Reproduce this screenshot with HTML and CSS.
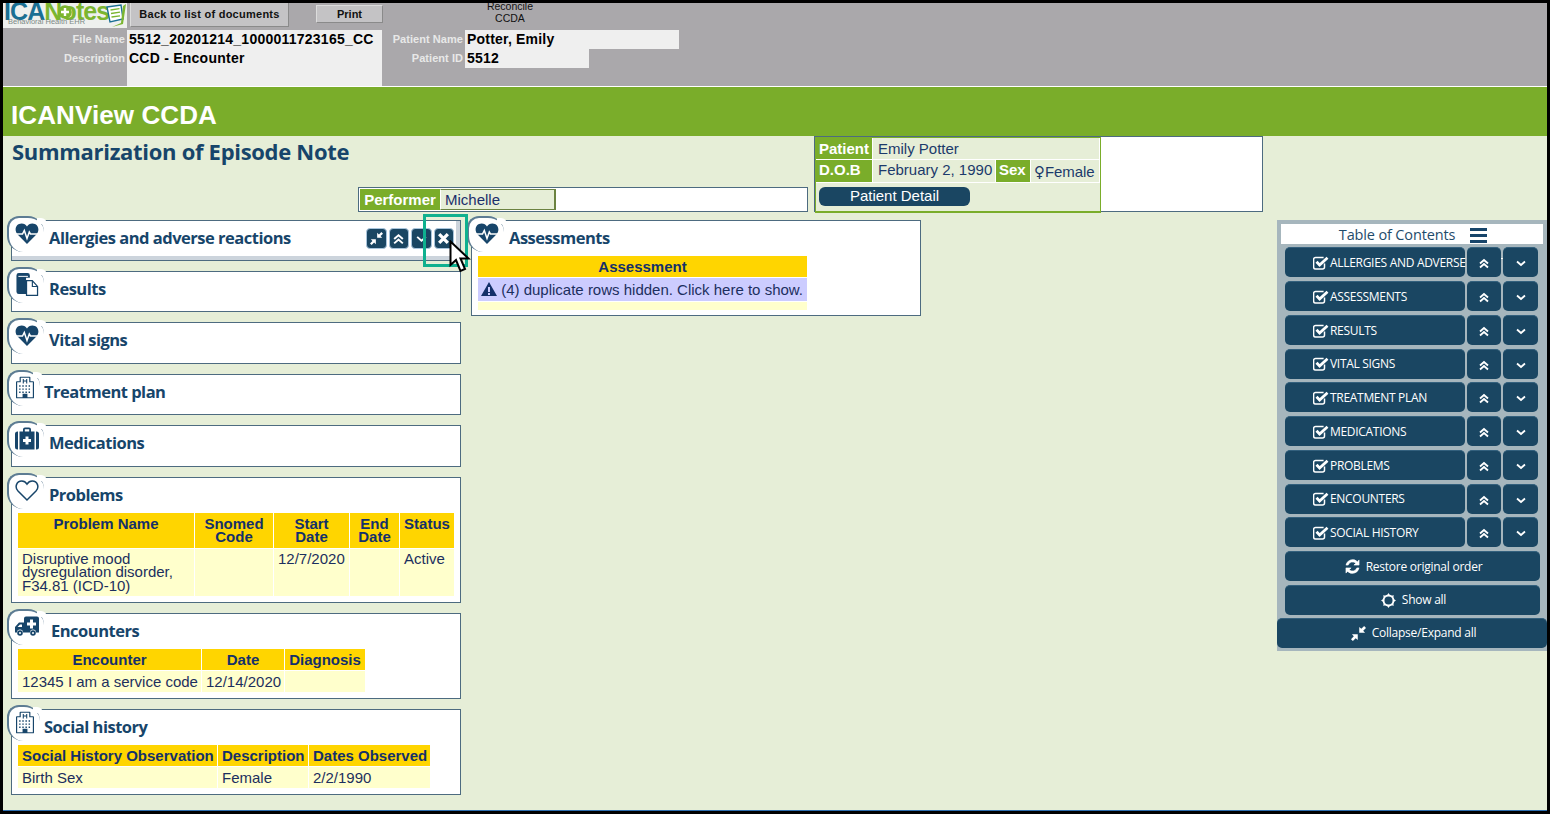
FILE: index.html
```html
<!DOCTYPE html>
<html lang="en">
<head>
<meta charset="utf-8">
<title>ICANView CCDA</title>
<link rel="stylesheet" href="styles.css">
</head>
<body>
<svg class="defs" width="0" height="0" aria-hidden="true">
  <symbol id="i-heartbeat" viewBox="0 0 24 22">
    <path fill="currentColor" d="M12 21.500 2.600 12C-1.200 7.800.6 1 6.600 1c2.500 0 4.200 1.200 5.400 3 1.200-1.800 2.900-3 5.400-3 6 0 7.800 6.800 4 11z"/>
    <path fill="none" stroke="#fff" stroke-width="1.500" d="M1 11.500h6.500l1.800-3.500 2.700 8 2.300-6.500 1.200 2h7.500"/>
  </symbol>
  <symbol id="i-files" viewBox="0 0 24 24">
    <path fill="currentColor" d="M1 2.500A2.500 2.500 0 0 1 3.500 0h9A2.500 2.500 0 0 1 15 2.500V5h-4v17H3.500A2.500 2.500 0 0 1 1 19.500z"/>
    <path fill="#fff" d="M3 3h10v1H3z"/>
    <path fill="#fff" stroke="currentColor" stroke-width="1.300" d="M11.500 8h6l5.500 6v9.300H11.500z"/>
    <path fill="currentColor" d="M17 8h1.200v5.500H23v1.200h-6z"/>
  </symbol>
  <symbol id="i-hospital" viewBox="0 0 20 24">
    <path fill="currentColor" d="M5 0h10a1 1 0 0 1 1 1v4h3a1 1 0 0 1 1 1v17a1 1 0 0 1-1 1H1a1 1 0 0 1-1-1V6a1 1 0 0 1 1-1h3V1a1 1 0 0 1 1-1z"/>
    <path fill="#fff" d="M5.300 1.300h9.400V6.300h4v16.400h-6V19h-5.400v3.700h-6V6.300h4z"/>
    <path fill="currentColor" d="M7.500 2.500h1.200v1.700h2.600V2.500h1.200v5h-1.200V5.400H8.700v2.100H7.500zM3.500 9.500h1.600v1.600H3.500zM7 9.500h1.600v1.600H7zM10.500 9.500h1.600v1.600h-1.600zM14 9.500h1.600v1.600H14zM3.500 13h1.600v1.600H3.500zM7 13h1.600v1.600H7zM10.500 13h1.600v1.600h-1.600zM14 13h1.600v1.600H14zM3.500 16.500h1.600v1.600H3.500zM7 16.500h1.600v1.600H7zM10.500 16.500h1.600v1.600h-1.600zM14 16.500h1.600v1.600H14z"/>
  </symbol>
  <symbol id="i-medkit" viewBox="0 0 24 22">
    <path fill="currentColor" fill-rule="evenodd" d="M2.500 4H3v18h-.5A2.500 2.500 0 0 1 0 19.500v-13A2.500 2.500 0 0 1 2.500 4zM21 4h.5A2.500 2.500 0 0 1 24 6.500v13a2.500 2.500 0 0 1-2.500 2.500H21zM8 2a2 2 0 0 1 2-2h4a2 2 0 0 1 2 2v2h3.500v18h-15V4H8zm1.800 2h4.400V1.800H9.800zM10.500 9v2.500H8v3h2.500V17h3v-2.500H16v-3h-2.500V9z"/>
  </symbol>
  <symbol id="i-heart" viewBox="0 0 24 22">
    <path fill="none" stroke="currentColor" stroke-width="1.500" d="M12 20.500 3 11.600C-.6 7.800 1.400 1.500 6.800 1.500c2.300 0 4 1.200 5.200 3.100 1.200-1.900 2.900-3.100 5.200-3.100 5.400 0 7.400 6.300 3.800 10.100z"/>
  </symbol>
  <symbol id="i-ambulance" viewBox="0 0 24 20">
    <path fill="currentColor" fill-rule="evenodd" d="M9 2a2 2 0 0 1 2-2h11a2 2 0 0 1 2 2v14h-3a3 3 0 0 0-6 0H8a3 3 0 0 0-6 0H0V10.500L4 6h5zM2.500 10.500h4.500V8H5zM15 3v3h-3v3h3v3h3V9h3V6h-3V3z"/>
    <circle fill="currentColor" cx="5" cy="16.500" r="2.800"/><circle fill="#fff" cx="5" cy="16.500" r="1"/>
    <circle fill="currentColor" cx="18" cy="16.500" r="2.800"/><circle fill="#fff" cx="18" cy="16.500" r="1"/>
  </symbol>
  <symbol id="i-compress" viewBox="0 0 16 16">
    <path fill="currentColor" d="M14 0l2 2-3 3 2 2.200H8.800V1l2.200 2zM2 16l-2-2 3-3-2-2.200h6.200V15L5 13z"/>
  </symbol>
  <symbol id="i-dup" viewBox="0 0 12 12">
    <path fill="none" stroke="currentColor" stroke-width="1.800" d="M2 6.500 6 3l4 3.500M2 10.500 6 7l4 3.500"/>
  </symbol>
  <symbol id="i-down" viewBox="0 0 12 12">
    <path fill="none" stroke="currentColor" stroke-width="1.800" d="M2 4.500 6 8l4-3.500"/>
  </symbol>
  <symbol id="i-times" viewBox="0 0 12 12">
    <path fill="none" stroke="currentColor" stroke-width="3" d="M2 2l8 8M10 2l-8 8"/>
  </symbol>
  <symbol id="i-check" viewBox="0 0 16 14">
    <path fill="none" stroke="currentColor" stroke-width="1.500" d="M11.500 7.500V11a2 2 0 0 1-2 2H2.600a2 2 0 0 1-2-2V3.500a2 2 0 0 1 2-2h8"/>
    <path fill="none" stroke="currentColor" stroke-width="2.800" d="M3.500 5.800 6.600 9 14.500 1.800"/>
  </symbol>
  <symbol id="i-refresh" viewBox="0 0 16 16">
    <path fill="currentColor" stroke="currentColor" stroke-width=".6" d="M15 1v5.500H9.500l2-2A5 5 0 0 0 3.400 6.500H1A7.300 7.300 0 0 1 13.300 2.800zM1 15V9.500h5.500l-2 2a5 5 0 0 0 8.100-2h2.400A7.300 7.300 0 0 1 2.700 13.200z"/>
  </symbol>
  <symbol id="i-sun" viewBox="0 0 16 16">
    <circle cx="8" cy="8" r="5.300" fill="none" stroke="currentColor" stroke-width="2"/>
    <path fill="currentColor" d="M8 0l1.500 2.500h-3zM8 16l-1.500-2.500h3zM0 8l2.500-1.500v3zM16 8l-2.500 1.500v-3zM2.300 2.300l2.800.7-2.100 2.100zM13.700 13.700l-2.800-.7 2.100-2.100zM13.700 2.300l-.7 2.800-2.100-2.100zM2.300 13.700l.7-2.800 2.100 2.100z"/>
  </symbol>
  <symbol id="i-warn" viewBox="0 0 16 14">
    <path fill="currentColor" fill-rule="evenodd" d="M8 0l8 14H0zM7 5v5h2V5zm0 6v2h2v-2z"/>
  </symbol>
</svg>

<div class="frame">
  <header class="topbar">
    <div class="toolbar">
      <div class="logo">
        <div class="logo-word"><span class="logo-ica">ICA</span><span class="logo-notes">Notes</span></div>
        <div class="logo-sub">Behavioral Health EHR</div>
        <svg class="logo-art" viewBox="0 0 124 24" width="124" height="24">
          <circle cx="62" cy="9" r="6.800" fill="#7bb530"/>
          <path fill="#fff" d="M60.800 5h2.400v2.800H66v2.400h-2.800V13h-2.400v-2.800H58V7.800h2.800z"/>
          <path fill="#fff" stroke="#1a6f93" stroke-width="1.400" d="M104 4l14-2 2 14-13 3z"/>
          <path stroke="#7bb530" stroke-width="1.300" d="M107.500 7l9-1.300M108 10.500l9-1.300M108.500 14l8.500-1.200"/>
          <path fill="#7bb530" d="M120 3l3-2-3 20-11 3 9-4z"/>
        </svg>
      </div>
      <button class="btn-back">Back to list of documents</button>
      <button class="btn-print">Print</button>
      <div class="reconcile">Reconcile<br>CCDA</div>
    </div>
    <div class="fields">
      <div class="fields-file">
        <div class="field-labels"><span>File Name</span><span>Description</span></div>
        <div class="file-box"><div>5512_20201214_1000011723165_CC</div><div>CCD - Encounter</div></div>
      </div>
      <div class="fields-patient">
        <div class="field-labels"><span>Patient Name</span><span>Patient ID</span></div>
        <div class="patient-vals"><div class="val-name">Potter, Emily</div><div class="val-id">5512</div></div>
      </div>
    </div>
  </header>

  <div class="banner">ICANView CCDA</div>

  <main class="content">
    <section class="summary">
      <div class="summary-left">
        <h1 class="doc-title">Summarization of Episode Note</h1>
        <div class="performer"><span class="performer-label">Performer</span><span class="performer-val">Michelle</span></div>
      </div>
      <div class="patient-card">
        <table class="patient-table">
          <colgroup><col class="pc1"><col class="pc2"><col class="pc3"><col class="pc4"></colgroup>
          <tr class="pr1"><th class="pt-head">Patient</th><td colspan="3">Emily Potter</td></tr>
          <tr class="pr2"><th class="pt-head">D.O.B</th><td>February 2, 1990</td><th class="pt-sex">Sex</th><td class="pt-female"><span class="venus">♀</span>Female</td></tr>
          <tr class="pr3"><td colspan="4" class="pt-btn-cell"><button class="btn-detail">Patient Detail</button></td></tr>
        </table>
      </div>
    </section>

    <section class="board">
      <div class="col">
        <article class="card card-empty card-active">
          <div class="tab"><svg class="tab-icon"><use href="#i-heartbeat"/></svg></div>
          <div class="head"><h2 class="t-49">Allergies and adverse reactions</h2>
            <div class="actions">
              <span class="act"><svg><use href="#i-compress"/></svg></span>
              <span class="act"><svg><use href="#i-dup"/></svg></span>
              <span class="act"><svg><use href="#i-down"/></svg></span>
              <span class="act"><svg><use href="#i-times"/></svg></span>
            </div>
          </div>
        </article>
        <article class="card card-empty">
          <div class="tab"><svg class="tab-icon"><use href="#i-files"/></svg></div>
          <div class="head"><h2 class="t-49">Results</h2></div>
        </article>
        <article class="card card-empty">
          <div class="tab"><svg class="tab-icon"><use href="#i-heartbeat"/></svg></div>
          <div class="head"><h2 class="t-49">Vital signs</h2></div>
        </article>
        <article class="card card-empty">
          <div class="tab tab-narrow"><svg class="tab-icon"><use href="#i-hospital"/></svg></div>
          <div class="head"><h2 class="t-44">Treatment plan</h2></div>
        </article>
        <article class="card card-empty">
          <div class="tab"><svg class="tab-icon"><use href="#i-medkit"/></svg></div>
          <div class="head"><h2 class="t-49">Medications</h2></div>
        </article>
        <article class="card card-problems">
          <div class="tab"><svg class="tab-icon"><use href="#i-heart"/></svg></div>
          <div class="head"><h2 class="t-49">Problems</h2></div>
          <table class="data data-problems">
            <colgroup><col class="c176"><col class="c78"><col class="c75"><col class="c49"><col class="c55"></colgroup>
            <tr><th class="two">Problem Name</th><th class="two">Snomed<br>Code</th><th class="two">Start<br>Date</th><th class="two">End<br>Date</th><th class="two">Status</th></tr>
            <tr><td class="tall">Disruptive mood dysregulation disorder, F34.81 (ICD-10)</td><td></td><td class="tall">12/7/2020</td><td></td><td class="tall">Active</td></tr>
          </table>
        </article>
        <article class="card card-enc">
          <div class="tab"><svg class="tab-icon"><use href="#i-ambulance"/></svg></div>
          <div class="head"><h2 class="t-51">Encounters</h2></div>
          <table class="data data-enc">
            <colgroup><col class="c183"><col class="c82"><col class="c81"></colgroup>
            <tr><th>Encounter</th><th>Date</th><th>Diagnosis</th></tr>
            <tr><td>12345 I am a service code</td><td>12/14/2020</td><td></td></tr>
          </table>
        </article>
        <article class="card card-enc">
          <div class="tab tab-narrow"><svg class="tab-icon"><use href="#i-hospital"/></svg></div>
          <div class="head"><h2 class="t-44">Social history</h2></div>
          <table class="data data-social">
            <colgroup><col class="c199"><col class="c90"><col class="c121"></colgroup>
            <tr><th>Social History Observation</th><th>Description</th><th>Dates Observed</th></tr>
            <tr><td>Birth Sex</td><td>Female</td><td>2/2/1990</td></tr>
          </table>
        </article>
      </div>

      <div class="col col-assess">
        <article class="card card-assess">
          <div class="tab"><svg class="tab-icon"><use href="#i-heartbeat"/></svg></div>
          <div class="head"><h2 class="t-38">Assessments</h2></div>
          <table class="data data-assess">
            <colgroup><col class="c329"></colgroup>
            <tr><th>Assessment</th></tr>
            <tr><td class="dup"><svg class="warn"><use href="#i-warn"/></svg> (4) duplicate rows hidden. Click here to show.</td></tr>
            <tr><td class="pad"></td></tr>
          </table>
        </article>
      </div>

      <aside class="toc">
        <div class="toc-title">Table of Contents <span class="burger"><i></i><i></i><i></i></span></div>
        <div class="toc-list">
          <div class="toc-row"><button class="toc-main"><svg class="chk"><use href="#i-check"/></svg>ALLERGIES AND ADVERSE REACTIONS</button><button class="toc-up"><svg><use href="#i-dup"/></svg></button><button class="toc-down"><svg><use href="#i-down"/></svg></button></div>
          <div class="toc-row"><button class="toc-main"><svg class="chk"><use href="#i-check"/></svg>ASSESSMENTS</button><button class="toc-up"><svg><use href="#i-dup"/></svg></button><button class="toc-down"><svg><use href="#i-down"/></svg></button></div>
          <div class="toc-row"><button class="toc-main"><svg class="chk"><use href="#i-check"/></svg>RESULTS</button><button class="toc-up"><svg><use href="#i-dup"/></svg></button><button class="toc-down"><svg><use href="#i-down"/></svg></button></div>
          <div class="toc-row"><button class="toc-main"><svg class="chk"><use href="#i-check"/></svg>VITAL SIGNS</button><button class="toc-up"><svg><use href="#i-dup"/></svg></button><button class="toc-down"><svg><use href="#i-down"/></svg></button></div>
          <div class="toc-row"><button class="toc-main"><svg class="chk"><use href="#i-check"/></svg>TREATMENT PLAN</button><button class="toc-up"><svg><use href="#i-dup"/></svg></button><button class="toc-down"><svg><use href="#i-down"/></svg></button></div>
          <div class="toc-row"><button class="toc-main"><svg class="chk"><use href="#i-check"/></svg>MEDICATIONS</button><button class="toc-up"><svg><use href="#i-dup"/></svg></button><button class="toc-down"><svg><use href="#i-down"/></svg></button></div>
          <div class="toc-row"><button class="toc-main"><svg class="chk"><use href="#i-check"/></svg>PROBLEMS</button><button class="toc-up"><svg><use href="#i-dup"/></svg></button><button class="toc-down"><svg><use href="#i-down"/></svg></button></div>
          <div class="toc-row"><button class="toc-main"><svg class="chk"><use href="#i-check"/></svg>ENCOUNTERS</button><button class="toc-up"><svg><use href="#i-dup"/></svg></button><button class="toc-down"><svg><use href="#i-down"/></svg></button></div>
          <div class="toc-row"><button class="toc-main"><svg class="chk"><use href="#i-check"/></svg>SOCIAL HISTORY</button><button class="toc-up"><svg><use href="#i-dup"/></svg></button><button class="toc-down"><svg><use href="#i-down"/></svg></button></div>
          <button class="toc-wide"><svg class="wide-i"><use href="#i-refresh"/></svg>Restore original order</button>
          <button class="toc-wide"><svg class="wide-i"><use href="#i-sun"/></svg>Show all</button>
          <button class="toc-wide toc-full"><svg class="wide-i"><use href="#i-compress"/></svg>Collapse/Expand all</button>
        </div>
      </aside>

      <div class="highlight"></div>
      <svg class="cursor" viewBox="0 0 22 33" width="22" height="33">
        <path fill="#fff" stroke="#000" stroke-width="2" d="M1.500 1.500V25l5.500-5 4.500 11 4.500-2-4.500-10.500h8z"/>
      </svg>
    </section>
  </main>
</div>
</body>
</html>
```

FILE: styles.css
```css
* { box-sizing: border-box; }
html, body { margin: 0; padding: 0; height: 100%; background: #000; overflow: hidden; }
body { padding: 3px 3px 3px 3px; font-family: "Liberation Sans", Arial, sans-serif; }
.defs { position: absolute; }

.frame {
  width: 1544px; height: 808px; background: #e6eed7;
  border-bottom: 1px solid #2e6fb0; display: flex; flex-direction: column;
}

/* top gray bar */
.topbar { height: 83px; background: #aaa8ab; flex: none; }
.toolbar { height: 27px; display: flex; align-items: flex-start; overflow: hidden; }
.logo { width: 124px; height: 25px; background: #eef0ee; overflow: hidden; position: relative; flex: none; }
.logo-word { font: bold 25px/17px "Liberation Sans", sans-serif; letter-spacing: -.9px; padding-left: 1px; white-space: nowrap; }
.logo-ica { color: #1a6f93; }
.logo-notes { color: #7bb530; }
.logo-sub { font: 7.500px/8px "Liberation Sans", sans-serif; color: #7d8a86; margin: -2px 0 0 5px; white-space: nowrap; position: relative; }
.logo-art { position: absolute; left: 0; top: 0; }
.btn-back {
  width: 159px; height: 24px; margin: 0 0 0 3px; padding: 0 0 2px; background: #c4c3c5;
  border: 1px solid #dcdcdc; border-top: 0; border-right-color: #8a8a8a; border-bottom-color: #8a8a8a;
  font: bold 11px "Liberation Sans", sans-serif; letter-spacing: .26px; color: #111;
}
.btn-print {
  width: 67px; height: 18px; margin: 2px 0 0 27px; padding: 0; background: #c4c3c5;
  border: 1px solid #dcdcdc; border-right-color: #8a8a8a; border-bottom-color: #8a8a8a;
  font: bold 11px "Liberation Sans", sans-serif; color: #111;
}
.reconcile { width: 60px; margin: -3px 0 0 97px; text-align: center; font: 10.500px/12px "Liberation Sans", sans-serif; color: #111; }

.fields { display: flex; height: 56px; }
.fields-file { display: flex; }
.field-labels { display: flex; flex-direction: column; text-align: right; font: bold 11px/19px "Liberation Sans", sans-serif; letter-spacing: .05px; color: #e8e8e8; }
.fields-file .field-labels { width: 122px; }
.file-box { width: 255px; height: 56px; margin-left: 2px; background: #efefef; font: bold 14px/19px "Liberation Sans", sans-serif; letter-spacing: .24px; color: #000; padding-left: 2px; white-space: nowrap; }
.fields-patient { display: flex; }
.fields-patient .field-labels { width: 81px; }
.patient-vals { margin-left: 2px; font: bold 14px/19px "Liberation Sans", sans-serif; letter-spacing: .2px; color: #000; }
.val-name { width: 214px; height: 19px; background: #efefef; padding-left: 2px; }
.val-id { width: 124px; height: 19px; background: #efefef; padding-left: 2px; }

.banner {
  height: 50px; flex: none; background: #7aad2a; border-top: 1px solid #fff;
  color: #fff; font: bold 26px/56px "Liberation Sans", sans-serif; letter-spacing: .1px; padding-left: 8px;
}

.content { flex: 1; min-height: 0; }

/* summary */
.summary { display: flex; height: 76px; margin-bottom: 8px; }
.summary-left { width: 805px; display: flex; flex-direction: column; justify-content: space-between; }
.doc-title { margin: 0; padding-left: 9px; font: 700 22px/30px "Open Sans", sans-serif; color: #17456a; letter-spacing: -.3px; }
.performer {
  align-self: flex-end; width: 450px; height: 25px; background: #fff; border: 1px solid #4d6b80;
  display: flex; padding: 1px; font-size: 15px; line-height: 21px;
}
.performer-label { width: 80px; background: #7aad2a; color: #fff; font-weight: bold; text-align: center; }
.performer-val { width: 116px; background: #e6eed7; color: #1c2f6b; border: 1px solid #6b8240; border-left-color: #fff; border-right-width: 2px; padding-left: 4px; line-height: 19px; }

.patient-card { width: 449px; margin-left: 6px; height: 76px; background: #fff; border: 1px solid #4d6b80; }
.patient-table {
  width: 286px; height: 75px; border-collapse: separate; border-spacing: 0; background: #e6eed7;
  border: 1px solid #7aad2a; border-bottom-width: 2px;
  font-size: 15px; color: #1c3a6b; table-layout: fixed;
}
.pc1 { width: 57px; } .pc2 { width: 123px; } .pc3 { width: 35px; } .pc4 { width: 69px; }
.patient-table td, .patient-table th { padding: 0; border-bottom: 1px solid #fff; border-right: 1px solid #fff; white-space: nowrap; }
.patient-table th { text-align: left; padding-left: 3px; }
.patient-table td { padding-left: 5px; }
.pr1 { height: 22px; }
.pr2 { height: 23px; }
.pr2 th, .pr2 td { padding-bottom: 3px; }
.pr3 { height: 28px; }
.pt-head { background: #7aad2a; color: #fff; }
.patient-table th.pt-sex { background: #7aad2a; color: #fff; padding-left: 3px; }
.patient-table .pt-female { padding: 2px 0 0 3px; letter-spacing: -.05px; }
.venus { font-family: "DejaVu Sans", sans-serif; font-size: 15px; }
.patient-table .pt-btn-cell { border: 0; padding: 0 0 0 3px; vertical-align: top; }
.btn-detail {
  display: block; width: 151px; height: 19px; margin-top: 4px; padding: 0 0 1px; border: 0; border-radius: 6px;
  background: #1a4662; color: #fff; font: 15px/18px "Liberation Sans", sans-serif;
}

/* board */
.board { display: flex; position: relative; padding-left: 8px; align-items: flex-start; }
.col { width: 450px; display: flex; flex-direction: column; gap: 10px; flex: none; }
.col-assess { margin-left: 10px; }

.card { position: relative; background: #fff; border: 1px solid #4d6b80; }
.card-empty { height: 41.4px; }
.card-active { height: 41px; box-shadow: inset -4px -4px 0 #ccd4dc; }
.card-problems { height: 126px; }
.card-enc { height: 86px; }
.card-assess { height: 96px; }

.tab {
  position: absolute; left: -5px; top: -5px; width: 37px; height: 36px; background: #fff;
  border: 2px solid #5d7c93; border-right: 0; border-bottom: 0; border-radius: 12px 16px 0 16px;
  display: flex; align-items: flex-start; justify-content: flex-start;
}
.tab::after { content: ""; position: absolute; left: 28px; top: 0; width: 10px; height: 6px; background: #fff; border-radius: 0 8px 0 0; }
.tab-narrow { width: 33px; }
.tab-narrow::after { left: 24px; }
.tab-icon { position: relative; z-index: 1; width: 24px; height: 23px; margin: 4px 0 0 6px; color: #17456a; }
.tab-narrow .tab-icon { width: 18px; height: 23px; margin: 4px 0 0 7px; }

.head { height: 35px; display: flex; align-items: center; padding-right: 6px; }
.card-empty .head, .card-assess .head { padding-bottom: 1px; }
.head h2 { margin: 0; font: 700 16.500px/22px "Open Sans", sans-serif; color: #17456a; letter-spacing: -.5px; white-space: nowrap; position: relative; }
.t-49 { padding-left: 37px; }
.t-44 { padding-left: 32px; }
.t-51 { padding-left: 39px; }
.t-38 { padding-left: 37px; }

.actions { margin-left: auto; display: flex; gap: 2px; margin-top: 1px; }
.act {
  width: 20.500px; height: 21px; background: #1a4662; border: 1px solid #a9c5dc; border-radius: 4px;
  color: #fff; display: flex; align-items: center; justify-content: center;
}
.act svg { width: 13px; height: 13px; }

/* tables */
.data { margin-left: 6px; border-collapse: separate; border-spacing: 0; table-layout: fixed; font-size: 15px; color: #1c2f5e; }
.data th { height: 22px; padding: 0 4px; background: #ffd500; color: #14306a; font-weight: bold; border-right: 1px solid #fff; border-bottom: 1px solid #fff; line-height: 13px; text-align: center; white-space: nowrap; }
.data td { height: 21px; padding: 0 4px; background: #ffffcc; border-right: 1px solid #fff; line-height: 13px; vertical-align: middle; white-space: nowrap; }
.data th:last-child, .data td:last-child { border-right: 0; }
.data th.two { height: 36px; vertical-align: top; padding-top: 4px; }
.data td.tall { height: 47px; vertical-align: top; padding-top: 3px; line-height: 13.500px; white-space: normal; }
.data-problems { width: 436px; }
.data-enc { width: 347px; }
.data-social { width: 412px; }
.c176 { width: 177px; } .c78 { width: 79px; } .c75 { width: 76px; } .c49 { width: 50px; } .c55 { width: 54px; }
.c183 { width: 184px; } .c82 { width: 83px; } .c81 { width: 80px; }
.c199 { width: 200px; } .c90 { width: 91px; } .c121 { width: 121px; }
.c329 { width: 329px; }
.data-assess { width: 329px; }
.data td.dup { height: 24px; background: #ccccff; padding: 1px 3px 0; border-bottom: 1px solid #fff; line-height: 22px; white-space: nowrap; }
.data td.pad { height: 8px; padding: 0; }
.warn { width: 16px; height: 14px; color: #14306a; vertical-align: -1px; }

/* toc */
.toc {
  position: relative; margin-left: auto; width: 270px; height: 431px; background: #a6b6bd;
  padding: 4px 4px 0;
}
.toc-title {
  height: 20px; background: #fff; text-align: center; color: #1f4c6b; padding-right: 30px;
  font: 400 14.500px/21px "Open Sans", sans-serif; letter-spacing: -.15px; position: relative; white-space: nowrap;
}
.burger { position: absolute; left: 189px; top: 4px; width: 17px; display: flex; flex-direction: column; gap: 3px; }
.burger i { display: block; height: 3px; background: #17456a; }
.toc-list { margin-top: 3.250px; display: flex; flex-direction: column; gap: 3.750px; }
.toc-row { height: 30px; display: flex; padding-left: 4px; gap: 2px; white-space: nowrap; }
.toc-row button, .toc-wide {
  background: #1a4662; border: 0; border-top: 1px solid #33607d; border-radius: 5px; color: #fff; padding: 0;
}
.toc-main {
  width: 180px; flex: none; text-align: left; padding: .5px 0 0 28px !important; display: flex; align-items: center;
  font: 400 12px/14px "Open Sans", sans-serif; letter-spacing: -.3px; white-space: nowrap;
}
.chk { width: 16px; height: 14px; margin-right: 1px; flex: none; }
.toc-up, .toc-down { position: relative; flex: none; height: 30px; display: flex; align-items: center; justify-content: center; }
.toc-up { width: 34px; }
.toc-down { width: 35px; }
.toc-up svg, .toc-down svg { width: 12px; height: 12px; margin-top: 1px; }
.toc-wide {
  display: flex; align-items: center; justify-content: center; height: 30px; width: 255px; margin-left: 4px;
  padding-left: 2px !important;
  font: 400 12px/14px "Open Sans", sans-serif; letter-spacing: -.25px;
}
.toc-full { width: 270px; margin: -.75px 0 0 -4px; border-top-color: #33607d; padding-left: 3px !important; }
.wide-i { width: 15px; height: 15px; margin-right: 6px; }

/* annotation overlay */
.highlight { position: absolute; left: 420px; top: -6px; width: 45px; height: 53px; border: 3px solid #0fb08f; pointer-events: none; }
.cursor { position: absolute; left: 446px; top: 20px; }
```
